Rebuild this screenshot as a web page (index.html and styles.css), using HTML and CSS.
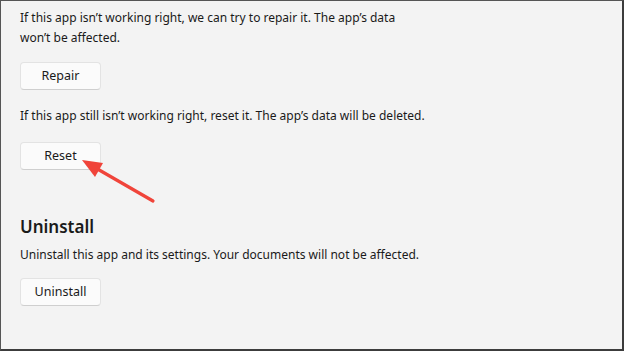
FILE: index.html
```html
<!DOCTYPE html>
<html lang="en">
<head>
    <meta charset="UTF-8">
    <meta name="viewport" content="width=device-width, initial-scale=1.0">
    <title>App settings</title>
    <link rel="stylesheet" href="styles.css">
</head>
<body>
    <div class="frame">
        <div class="section">
            <p class="desc">If this app isn’t working right, we can try to repair it. The app’s data<br>won’t be affected.</p>
            <button class="btn">Repair</button>
        </div>

        <div class="section">
            <p class="desc">If this app still isn’t working right, reset it. The app’s data will be deleted.</p>
            <button class="btn btn-reset">Reset</button>
        </div>

        <div class="section uninstall">
            <h2>Uninstall</h2>
            <p class="desc">Uninstall this app and its settings. Your documents will not be affected.</p>
            <button class="btn">Uninstall</button>
        </div>

        <!-- annotation arrow pointing at Reset -->
        <svg class="arrow" width="624" height="351" viewBox="0 0 624 351">
            <line x1="153" y1="201" x2="94" y2="167" stroke="#f0443a" stroke-width="3.2" stroke-linecap="round"/>
            <polygon points="82,160 103,163 95,177" fill="#f0443a"/>
        </svg>
    </div>
</body>
</html>
```

FILE: styles.css
```css
body {
    margin: 0;
    font-family: "Noto Sans", "Open Sans", sans-serif;
    color: #1a1a1a;
}
.frame {
    position: relative;
    box-sizing: border-box;
    width: 624px;
    height: 351px;
    background: #f3f3f3;
    border: 1px solid #555;
    border-right: 2px solid #3c3c3c;
    border-bottom: 2px solid #3c3c3c;
    padding: 7px 0 0 19px;
}
.desc {
    margin: 0;
    font-size: 12px;
    line-height: 20px;
}
.btn {
    display: block;
    box-sizing: border-box;
    width: 81px;
    height: 28px;
    margin-top: 14px;
    background: #fbfbfb;
    border: 1px solid #e3e3e3;
    border-bottom-color: #cfcfcf;
    border-radius: 4px;
    font-family: inherit;
    font-size: 12.5px;
    color: #1a1a1a;
    padding: 0 0 1px 0;
}
.btn-reset {
    margin-top: 16px;
}
.section {
    margin-bottom: 16px;
}
.uninstall {
    margin-top: 45px;
}
h2 {
    margin: 0 0 6px 0;
    font-size: 17px;
    font-weight: 600;
    line-height: 24px;
}
.uninstall .btn {
    margin-top: 13px;
}
.arrow {
    position: absolute;
    left: -1px;
    top: -1px;
    pointer-events: none;
}
```
